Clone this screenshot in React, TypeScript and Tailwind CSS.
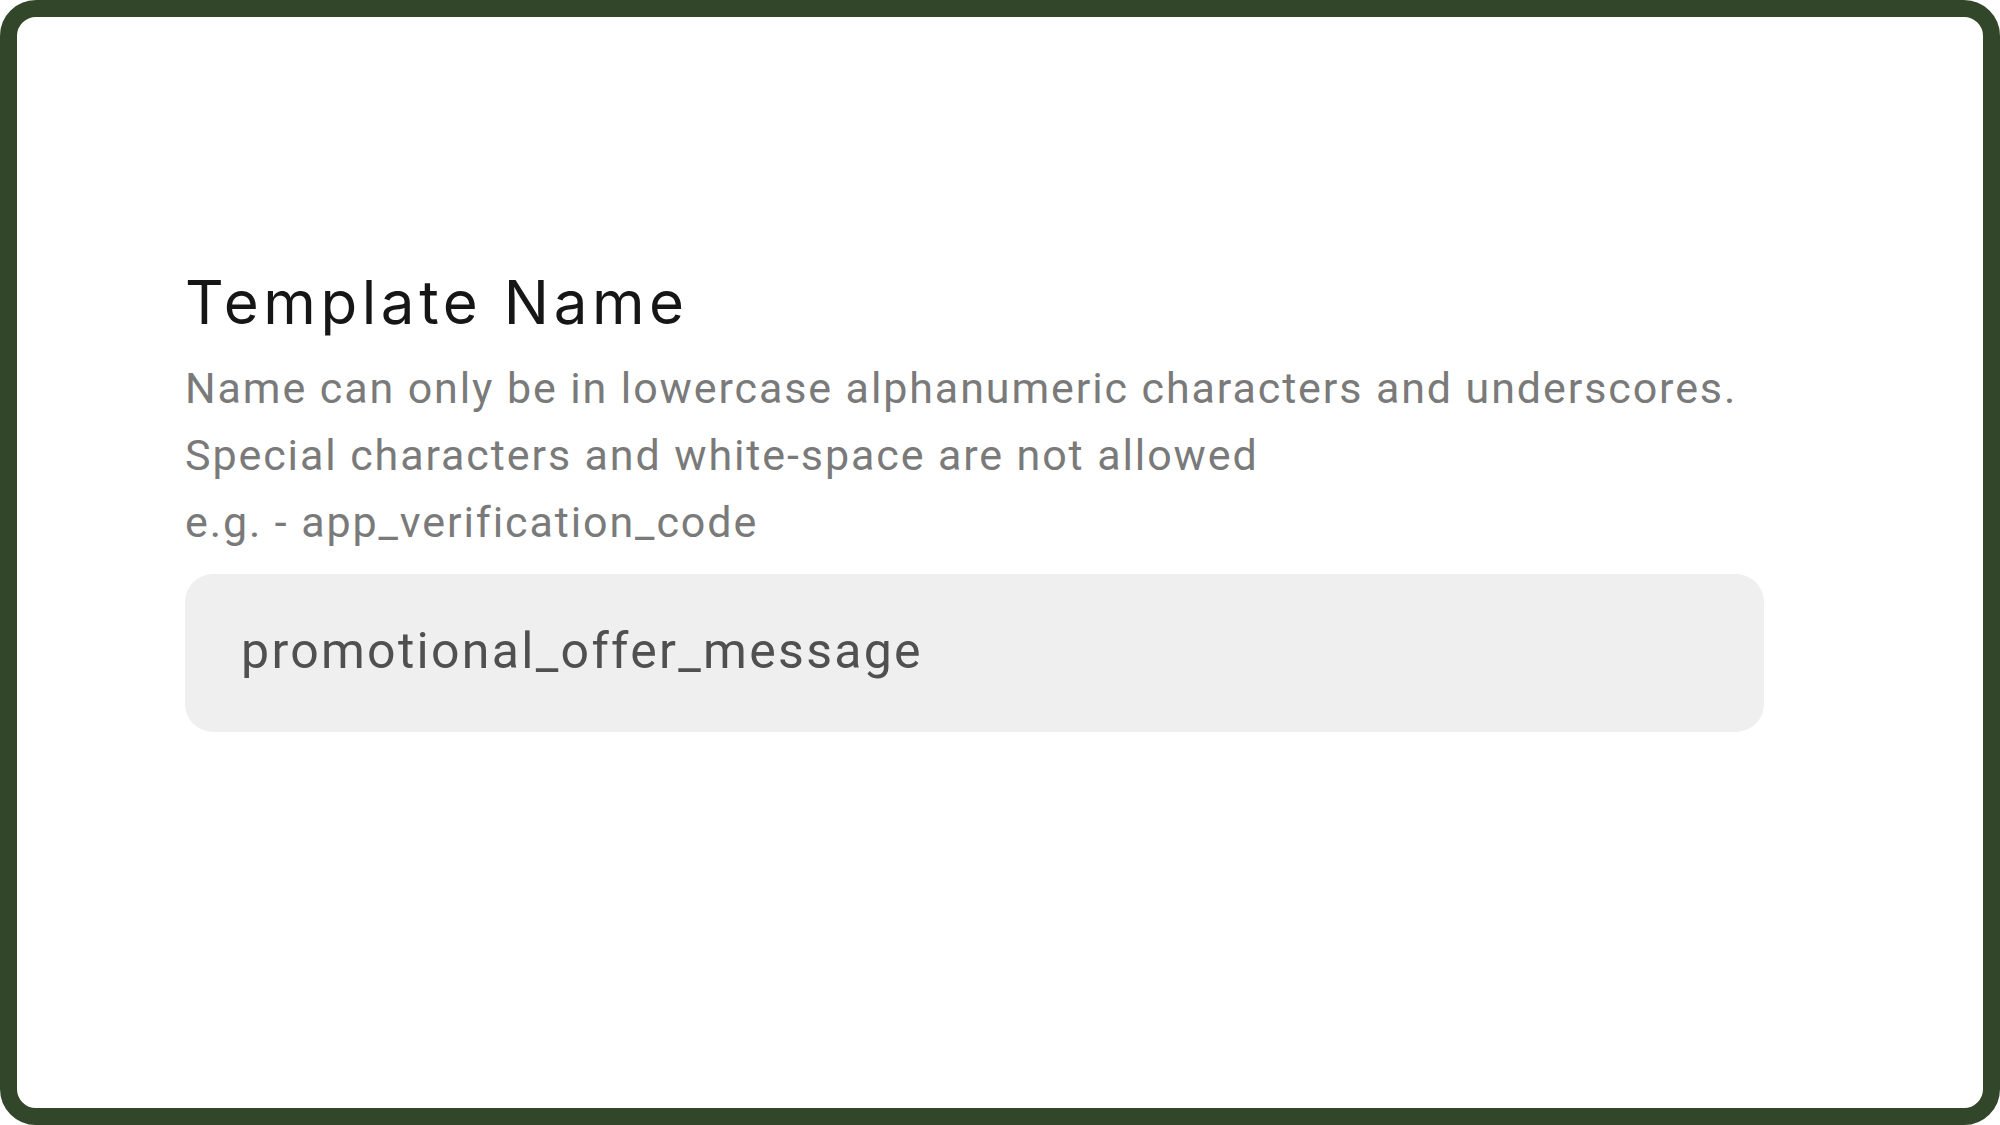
export default function App() {
  return (
    <div className="h-[1125px] w-[2000px] bg-white">
      <div className="flex h-full w-full flex-col rounded-[36px] border-[17px] border-[#32462a] bg-white pl-[168px] pt-[245px]">
        <h1 className="text-[60px] leading-[80px] font-normal text-[#161616] tracking-[4.6px] [font-family:Inter,sans-serif]">
          Template Name
        </h1>
        <div className="mt-[13px] text-[43px] leading-[67px] text-[#7a7a7a] tracking-[1.9px] [font-family:Roboto,sans-serif]">
          <p>Name can only be in lowercase alphanumeric characters and underscores.</p>
          <p>Special characters and white-space are not allowed</p>
          <p>e.g. - app_verification_code</p>
        </div>
        <div className="mt-[18px] flex h-[158px] w-[1579px] items-center rounded-[28px] bg-[#efefef] pb-[4px] pl-[56px]">
          <span className="text-[50px] tracking-[2.3px] text-[#505050] [font-family:Roboto,sans-serif]">promotional_offer_message</span>
        </div>
      </div>
    </div>
  );
}
